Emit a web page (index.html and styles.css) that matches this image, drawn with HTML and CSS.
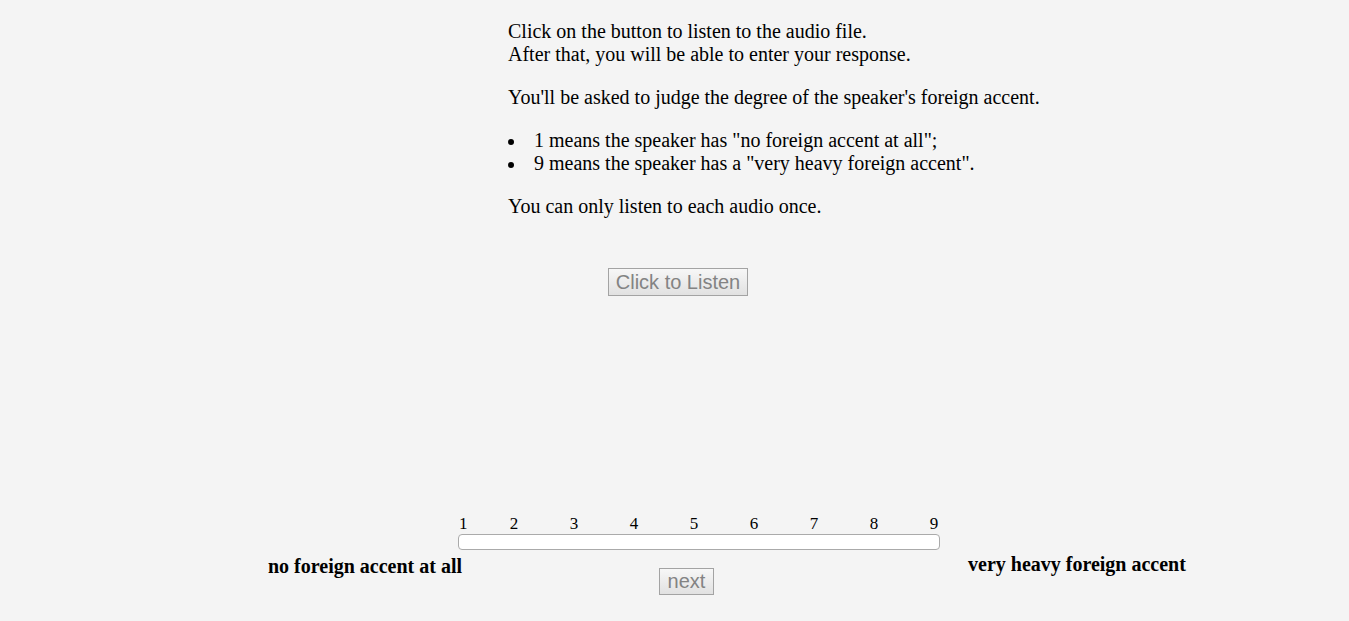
FILE: index.html
```html
<!DOCTYPE html>
<html>
<head>
<meta charset="utf-8">
<link rel="stylesheet" href="styles.css">
</head>
<body>
<div class="page">
  <div class="instructions">
    <p>Click on the button to listen to the audio file.<br>After that, you will be able to enter your response.</p>
    <p>You'll be asked to judge the degree of the speaker's foreign accent.</p>
    <ul class="bullets">
      <li>1 means the speaker has "no foreign accent at all";</li>
      <li>9 means the speaker has a "very heavy foreign accent".</li>
    </ul>
    <p>You can only listen to each audio once.</p>
  </div>
  <div class="listen-row">
    <button class="btn btn-listen" disabled>Click to Listen</button>
  </div>
  <div class="scale">
    <div class="ticks">
      <span class="tick first">1</span>
      <span class="tick">2</span>
      <span class="tick">3</span>
      <span class="tick">4</span>
      <span class="tick">5</span>
      <span class="tick">6</span>
      <span class="tick">7</span>
      <span class="tick">8</span>
      <span class="tick">9</span>
    </div>
    <div class="track"></div>
  </div>
  <div class="bottom-row">
    <span class="label label-left">no foreign accent at all</span>
    <button class="btn btn-next" disabled>next</button>
    <span class="label label-right">very heavy foreign accent</span>
  </div>
</div>
</body>
</html>
```
FILE: styles.css
```css
html, body {
  margin: 0;
  padding: 0;
  background: #f4f4f4;
}
body {
  font-family: "Liberation Serif", "Times New Roman", serif;
  font-size: 20px;
  line-height: 23px;
  color: #000;
}
.page {
  padding-top: 20px;
}
.instructions {
  margin-left: 508px;
}
.instructions p {
  margin: 0 0 20px 0;
}
.bullets {
  list-style: none;
  margin: 0 0 20px 0;
  padding: 0;
}
.bullets li::before {
  content: "";
  display: inline-block;
  width: 6px;
  height: 6px;
  border-radius: 50%;
  background: #000;
  margin: 0 20px 2px 0;
  vertical-align: baseline;
}
.listen-row {
  margin-top: 50px;
  padding-left: 608px;
  display: flex;
}
.btn {
  font-family: "Liberation Sans", Arial, sans-serif;
  font-size: 20px;
  line-height: 22px;
  color: #838383;
  background: linear-gradient(#f7f7f7, #e1e1e1);
  border: 1px solid #a3a3a3;
  border-radius: 0;
  padding: 2px 0;
  margin: 0;
}
.btn-listen {
  width: 140px;
  height: 28px;
}
.btn-next {
  width: 55px;
  height: 27px;
  padding: 1px 0 2px;
}
.scale {
  margin-top: 218px;
  margin-left: 458px;
  width: 482px;
}
.ticks {
  display: grid;
  grid-template-columns: 26px repeat(8, 60px);
  font-size: 17px;
  line-height: 18px;
  height: 18px;
  padding-top: 1px;
}
.tick {
  text-align: center;
}
.tick.first {
  text-align: left;
  padding-left: 1px;
}
.track {
  margin-top: 1px;
  height: 14px;
  background: #fff;
  border: 1px solid #aaa;
  border-radius: 4px;
}
.bottom-row {
  display: flex;
  align-items: flex-start;
  margin-top: 4px;
  padding-left: 268px;
}
.label {
  font-weight: bold;
  white-space: nowrap;
}
.label-left {
  margin-top: 1px;
  width: 194px;
}
.btn-next {
  margin-top: 14px;
  margin-left: 197px;
}
.label-right {
  margin-left: 254px;
  margin-top: -1px;
}
```
